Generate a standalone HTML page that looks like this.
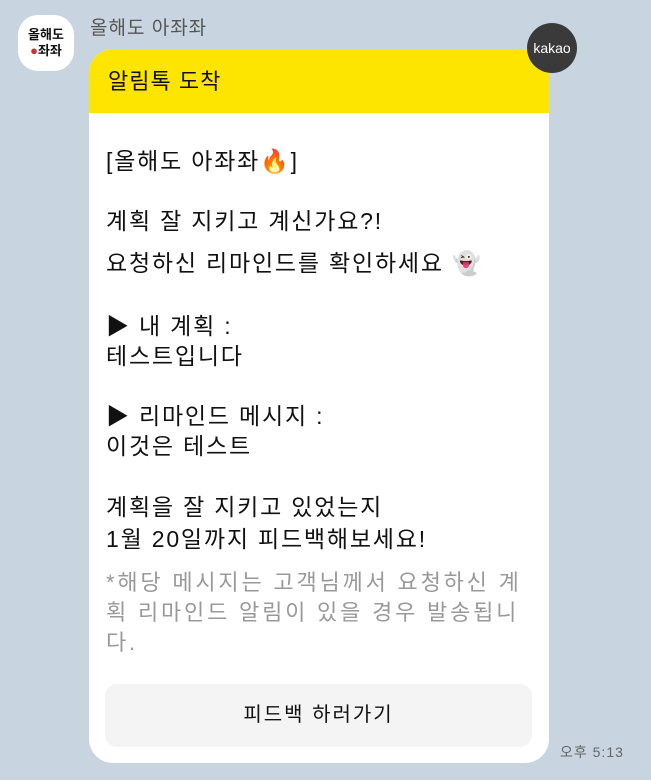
<!DOCTYPE html>
<html><head><meta charset="utf-8"><style>
body{margin:0;width:651px;height:780px;background:#c8d5e0;font-family:"Liberation Sans","Noto Sans CJK KR","NanumGothic",sans-serif;position:relative;overflow:hidden}
.pf{position:absolute;left:18px;top:15px;width:56px;height:56px;background:#fff;border-radius:20px;text-align:center;font-size:13px;font-weight:bold;line-height:16px;color:#111;box-sizing:border-box;padding-top:12px}
.name{position:absolute;left:90px;top:13px;font-size:19px;color:#555;letter-spacing:1px}
.card{position:absolute;left:89px;top:49px;width:460px;height:714px;background:#fff;border-radius:24px;overflow:hidden}
.hd{height:64px;background:#fee500;font-size:22px;color:#111;padding-left:19px;line-height:66px;letter-spacing:1px}
.t{position:absolute;left:17px;font-size:23px;color:#111;white-space:nowrap;letter-spacing:1.8px}
.g{color:#999;font-size:22px;letter-spacing:2.8px}
.btn{position:absolute;left:16px;top:635px;width:427px;height:63px;background:#f4f4f4;border-radius:12px;text-align:center;line-height:63px;font-size:20px;color:#111;letter-spacing:2px}
.kk{position:absolute;left:527px;top:23px;width:50px;height:50px;border-radius:50%;background:#3a3a3a;color:#fff;font-size:14px;text-align:center;line-height:50px}
.tm{position:absolute;left:560px;top:742px;font-size:14px;color:#666;letter-spacing:1px}
</style></head><body>
<div class="pf">올해도<br><span style="color:#c33">●</span>좌좌</div>
<div class="name">올해도 아좌좌</div>
<div class="card">
<div class="hd">알림톡 도착</div>
<div class="t" style="top:93px">[올해도 아좌좌🔥]</div>
<div class="t" style="top:153px">계획 잘 지키고 계신가요?!</div>
<div class="t" style="top:195px">요청하신 리마인드를 확인하세요 👻</div>
<div class="t" style="top:258px">▶ 내 계획 :</div>
<div class="t" style="top:288px">테스트입니다</div>
<div class="t" style="top:348px">▶ 리마인드 메시지 :</div>
<div class="t" style="top:378px">이것은 테스트</div>
<div class="t" style="top:439px">계획을 잘 지키고 있었는지</div>
<div class="t" style="top:471px">1월 20일까지 피드백해보세요!</div>
<div class="t g" style="top:516px">*해당 메시지는 고객님께서 요청하신 계</div>
<div class="t g" style="top:546px">획 리마인드 알림이 있을 경우 발송됩니</div>
<div class="t g" style="top:576px">다.</div>
<div class="btn">피드백 하러가기</div>
</div>
<div class="kk">kakao</div>
<div class="tm">오후 5:13</div>
</body></html>
